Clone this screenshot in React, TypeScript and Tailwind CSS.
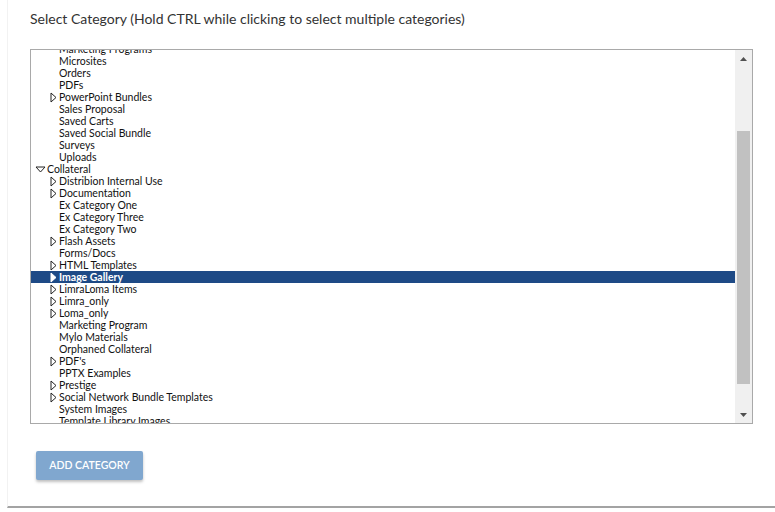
import React from 'react';

type Item = { label: string; level: 1 | 2; arrow?: 'closed' | 'open'; selected?: boolean };

const items: Item[] = [
    { label: 'Marketing Programs', level: 2 },
    { label: 'Microsites', level: 2 },
    { label: 'Orders', level: 2 },
    { label: 'PDFs', level: 2 },
    { label: 'PowerPoint Bundles', level: 2, arrow: 'closed' },
    { label: 'Sales Proposal', level: 2 },
    { label: 'Saved Carts', level: 2 },
    { label: 'Saved Social Bundle', level: 2 },
    { label: 'Surveys', level: 2 },
    { label: 'Uploads', level: 2 },
    { label: 'Collateral', level: 1, arrow: 'open' },
    { label: 'Distribion Internal Use', level: 2, arrow: 'closed' },
    { label: 'Documentation', level: 2, arrow: 'closed' },
    { label: 'Ex Category One', level: 2 },
    { label: 'Ex Category Three', level: 2 },
    { label: 'Ex Category Two', level: 2 },
    { label: 'Flash Assets', level: 2, arrow: 'closed' },
    { label: 'Forms/Docs', level: 2 },
    { label: 'HTML Templates', level: 2, arrow: 'closed' },
    { label: 'Image Gallery', level: 2, arrow: 'closed', selected: true },
    { label: 'LimraLoma Items', level: 2, arrow: 'closed' },
    { label: 'Limra_only', level: 2, arrow: 'closed' },
    { label: 'Loma_only', level: 2, arrow: 'closed' },
    { label: 'Marketing Program', level: 2 },
    { label: 'Mylo Materials', level: 2 },
    { label: 'Orphaned Collateral', level: 2 },
    { label: "PDF's", level: 2, arrow: 'closed' },
    { label: 'PPTX Examples', level: 2 },
    { label: 'Prestige', level: 2, arrow: 'closed' },
    { label: 'Social Network Bundle Templates', level: 2, arrow: 'closed' },
    { label: 'System Images', level: 2 },
    { label: 'Template Library Images', level: 2 },
    { label: 'Videos', level: 2 },
];

function ClosedArrow({ selected }: { selected?: boolean }) {
    return (
        <svg width="7" height="11" viewBox="0 0 7 11" className="block">
            <path
                d="M1 1 L6 5.5 L1 10 Z"
                fill={selected ? '#ffffff' : 'none'}
                stroke={selected ? '#ffffff' : '#222222'}
                strokeWidth="1"
            />
        </svg>
    );
}

function OpenArrow() {
    return (
        <svg width="11" height="7" viewBox="0 0 11 7" className="block">
            <path d="M1 1 L10 1 L5.5 6 Z" fill="none" stroke="#222222" strokeWidth="1" />
        </svg>
    );
}

function Row({ item }: { item: Item }) {
    const sel = item.selected;
    return (
        <div
            className={`h-[12px] flex items-center whitespace-nowrap ${sel ? 'bg-[#1e4a86] text-white' : 'text-[#111111]'
                }`}
        >
            {item.level === 1 ? (
                <div className="flex items-center">
                    <div className="w-[16px] flex justify-end pr-[1px]">{item.arrow === 'open' && <OpenArrow />}</div>
                    <span>{item.label}</span>
                </div>
            ) : (
                <div className="flex items-center">
                    <div className="w-[28px] flex justify-end pr-[2px]">
                        {item.arrow === 'closed' && <ClosedArrow selected={sel} />}
                    </div>
                    <span className={sel ? 'font-bold' : ''}>{item.label}</span>
                </div>
            )}
        </div>
    );
}

function Scrollbar() {
    return (
        <div className="w-[17px] h-full bg-[#f0f0f0] flex flex-col items-center">
            <div className="h-[17px] w-full flex items-center justify-center">
                <svg width="7" height="4" viewBox="0 0 7 4">
                    <path d="M0 4 L3.5 0 L7 4 Z" fill="#505050" />
                </svg>
            </div>
            <div className="flex-1 w-full px-[2px] flex flex-col">
                <div className="h-[64px]" />
                <div className="h-[253px] bg-[#c1c1c1]" />
            </div>
            <div className="h-[17px] w-full flex items-center justify-center">
                <svg width="7" height="4" viewBox="0 0 7 4">
                    <path d="M0 0 L7 0 L3.5 4 Z" fill="#505050" />
                </svg>
            </div>
        </div>
    );
}

export default function App() {
    return (
        <div className="w-[775px] h-[512px] bg-white font-['Lato',sans-serif]">
            <div className="ml-[7px] h-[508px] border-l border-l-[#f2f2f2] border-b-2 border-b-[#a3a3a3] flex flex-col">
                <div className="pl-[22px] pt-[9px] h-[49px] text-[14px] leading-[20px] text-[#333333]">
                    Select Category (Hold CTRL while clicking to select multiple categories)
                </div>
                <div className="ml-[22px] w-[723px] h-[375px] border border-[#a9a9a9] flex overflow-hidden">
                    <div className="flex-1 overflow-hidden">
                        <div className="-mt-[7px] text-[10.5px] leading-[12px]">
                            {items.map((it) => (
                                <Row key={it.label} item={it} />
                            ))}
                        </div>
                    </div>
                    <Scrollbar />
                </div>
                <div className="pl-[28px] pt-[27px]">
                    <button className="h-[29px] w-[107px] bg-[#80a7cf] text-white text-[10.5px] font-semibold rounded-[2px] shadow-[0_2px_3px_rgba(0,0,0,0.25)]">
                        ADD CATEGORY
                    </button>
                </div>
            </div>
        </div>
    );
}
